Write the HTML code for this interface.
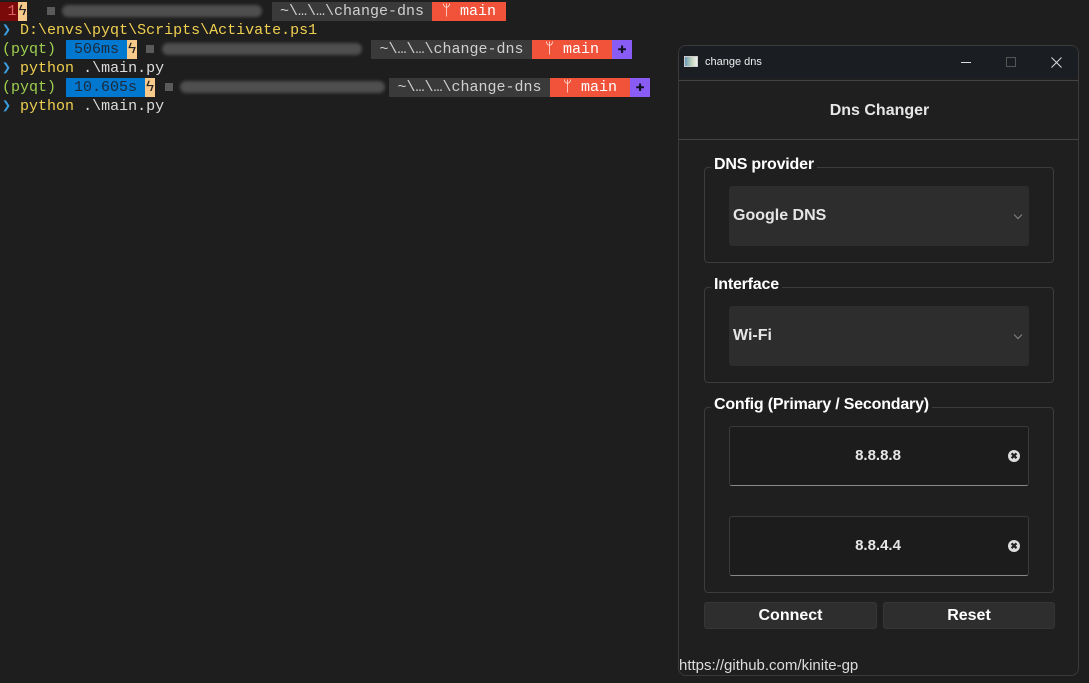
<!DOCTYPE html>
<html><head><meta charset="utf-8"><style>
*{margin:0;padding:0;box-sizing:border-box}
body{width:1089px;height:683px;background:#1e1e1e;position:relative;overflow:hidden;font-family:"Liberation Mono",monospace;font-size:15px}
.t{position:absolute;height:19px;line-height:19px;white-space:pre;color:#cccccc}
.seg{position:absolute;height:19px;line-height:19px;white-space:pre;text-align:center}
.blur{position:absolute;height:12px;background:#4f4f4f;border-radius:6px;filter:blur(1.5px)}
.sq{position:absolute;width:8px;height:8px;background:#5a5a5a}
.w{position:absolute;left:678px;top:45px;width:401px;height:631px;background:#1f1f1f;border:1px solid #3a3a3a;border-radius:8px;overflow:hidden;font-family:"Liberation Sans",sans-serif;color:#e6e6e6}
.grp{position:absolute;left:25px;width:350px;border:1px solid #3c3c3c;border-radius:4px}
.lbl{position:absolute;left:6px;top:-12px;background:#1f1f1f;padding:0 3px;font-weight:bold;font-size:16px;letter-spacing:-0.2px;color:#fff}
.cb{position:absolute;left:24px;width:300px;height:60px;background:#2d2d2d;border-radius:3px;font-weight:bold;font-size:16px;line-height:60px;padding-left:4px}
.cb:after{content:"";position:absolute;right:8px;top:26px;width:5px;height:5px;border-right:1px solid #888;border-bottom:1px solid #888;transform:rotate(45deg)}
.in{position:absolute;left:24px;width:300px;height:60px;background:#1c1c1c;border:1px solid #3a3a3a;border-bottom-color:#888;border-radius:3px;font-weight:bold;font-size:15px;line-height:58px;text-align:center;padding-right:2px}
.x{position:absolute;right:8px;top:23px;width:12px;height:12px;border-radius:50%;background:#ddd;color:#222;font-size:9px;line-height:12px;text-align:center}
.btn{position:absolute;top:556px;height:27px;background:#2e2e2e;border:1px solid #363636;border-radius:3px;font-weight:bold;font-size:16px;line-height:25px;text-align:center;color:#fff}
</style></head><body>
<!-- line 1 -->
<div class="seg" style="left:0;top:2px;width:18px;background:#7a0a0a;color:#e06060;padding-left:6px">1</div>
<div class="seg" style="left:18px;top:2px;width:9px;background:#f7c98a;color:#222">ϟ</div>
<div class="sq" style="left:47px;top:7px"></div>
<div class="blur" style="left:62px;top:5px;width:200px"></div>
<div class="seg" style="left:272px;top:2px;width:160px;background:#3a3a3a;color:#d0d0d0">~\…\…\change-dns</div>
<div class="seg" style="left:432px;top:2px;width:74px;background:#f0533a;color:#fff">ᛘ main</div>
<!-- line 2 -->
<div class="t" style="left:2px;top:21px;color:#3b9de0">❯ <span style="color:#f0d050">D:\envs\pyqt\Scripts\Activate.ps1</span></div>
<!-- line 3 -->
<div class="t" style="left:2px;top:40px;color:#9fcf50">(pyqt)</div>
<div class="seg" style="left:66px;top:40px;width:61px;background:#0078d0;color:#1e2a3a">506ms</div>
<div class="seg" style="left:127px;top:40px;width:10px;background:#f7c98a;color:#222">ϟ</div>
<div class="sq" style="left:146px;top:45px"></div>
<div class="blur" style="left:162px;top:43px;width:200px"></div>
<div class="seg" style="left:371px;top:40px;width:161px;background:#3a3a3a;color:#d0d0d0">~\…\…\change-dns</div>
<div class="seg" style="left:532px;top:40px;width:80px;background:#f0533a;color:#fff">ᛘ main</div>
<div class="seg" style="left:612px;top:40px;width:20px;background:#8a5cf6;color:#112">✚</div>
<!-- line 4 -->
<div class="t" style="left:2px;top:59px;color:#3b9de0">❯ <span style="color:#f0d050">python</span> <span style="color:#ddd">.\main.py</span></div>
<!-- line 5 -->
<div class="t" style="left:2px;top:78px;color:#9fcf50">(pyqt)</div>
<div class="seg" style="left:66px;top:78px;width:79px;background:#0078d0;color:#1e2a3a">10.605s</div>
<div class="seg" style="left:145px;top:78px;width:10px;background:#f7c98a;color:#222">ϟ</div>
<div class="sq" style="left:165px;top:83px"></div>
<div class="blur" style="left:180px;top:81px;width:205px"></div>
<div class="seg" style="left:389px;top:78px;width:161px;background:#3a3a3a;color:#d0d0d0">~\…\…\change-dns</div>
<div class="seg" style="left:550px;top:78px;width:80px;background:#f0533a;color:#fff">ᛘ main</div>
<div class="seg" style="left:630px;top:78px;width:20px;background:#8a5cf6;color:#112">✚</div>
<!-- line 6 -->
<div class="t" style="left:2px;top:97px;color:#3b9de0">❯ <span style="color:#f0d050">python</span> <span style="color:#ddd">.\main.py</span></div>

<div class="w">
 <div style="position:absolute;left:0;top:0;width:401px;height:32px;background:#1a1d22"></div>
 <div style="position:absolute;left:5px;top:10px;width:14px;height:11px;background:linear-gradient(90deg,#6b9ab8,#c8d8c0 60%,#eee);border:1px solid #ccc"></div>
 <div style="position:absolute;left:26px;top:10px;font-size:11px;color:#eee">change dns</div>
 <div style="position:absolute;left:282px;top:16px;width:10px;height:1px;background:#ddd"></div>
 <div style="position:absolute;left:327px;top:11px;width:10px;height:10px;border:1px solid #555"></div>
 <svg style="position:absolute;left:372px;top:11px" width="11" height="11"><path d="M0.5 0.5L10.5 10.5M10.5 0.5L0.5 10.5" stroke="#ddd" stroke-width="1"/></svg>
 <div style="position:absolute;left:0;top:34px;width:401px;height:60px;border-top:1px solid #444;border-bottom:1px solid #444;text-align:center;line-height:60px;font-weight:bold;font-size:16px">Dns Changer</div>
 <div class="grp" style="top:121px;height:96px"><div class="lbl">DNS provider</div><div class="cb" style="top:18px">Google DNS</div></div>
 <div class="grp" style="top:241px;height:96px"><div class="lbl">Interface</div><div class="cb" style="top:18px">Wi-Fi</div></div>
 <div class="grp" style="top:361px;height:186px"><div class="lbl">Config (Primary / Secondary)</div>
  <div class="in" style="top:18px">8.8.8.8<div class="x">✖</div></div>
  <div class="in" style="top:108px">8.8.4.4<div class="x">✖</div></div></div>
 <div class="btn" style="left:25px;width:173px">Connect</div>
 <div class="btn" style="left:204px;width:172px">Reset</div>
 <div style="position:absolute;left:0;top:611px;font-size:15px;color:#ddd">https://github.com/kinite-gp</div>
</div>
</body></html>
